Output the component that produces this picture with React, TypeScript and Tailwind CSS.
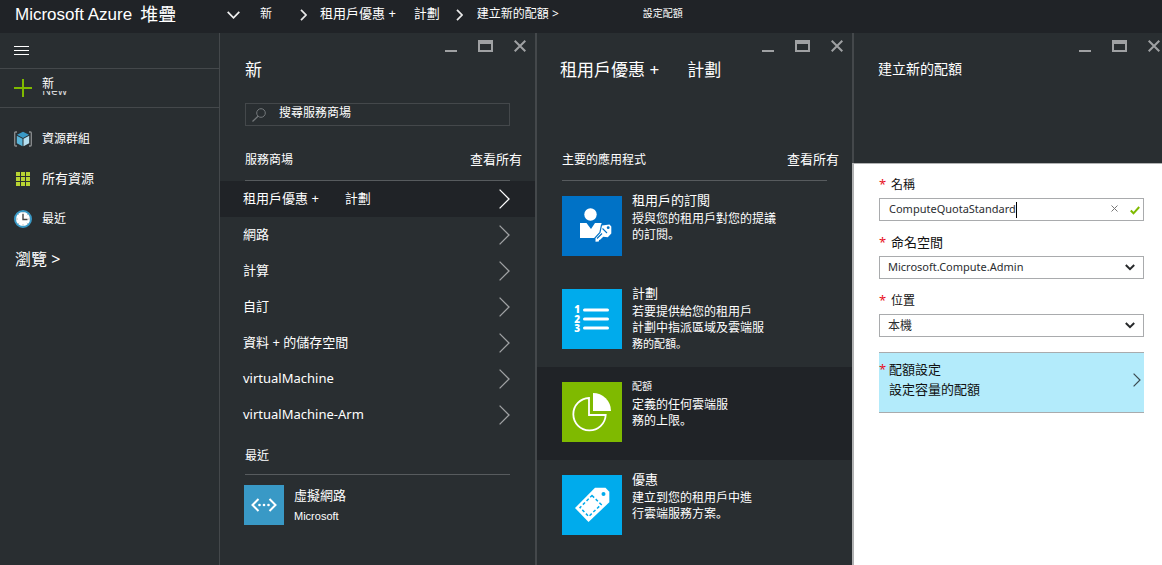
import React from "react";

const CJK = "font-['Noto_Sans','Noto_Sans_CJK_TC',sans-serif]";

function WindowControls() {
  const button = "block text-[#9fa1a3]";
  return (
    <div className="flex items-center">
      <button type="button" aria-label="最小化" className={button}>
        <svg width="12" height="14" viewBox="0 0 12 14" className="block">
          <path d="M0 12h12" stroke="currentColor" strokeWidth="2" />
        </svg>
      </button>
      <button type="button" aria-label="最大化" className={`${button} ml-[21px]`}>
        <svg width="15" height="14" viewBox="0 0 15 14" className="block">
          <path fillRule="evenodd" fill="currentColor" d="M0 1h15v12H0zM2 5v6h11V5z" />
        </svg>
      </button>
      <button type="button" aria-label="關閉" className={`${button} ml-[21px]`}>
        <svg width="12" height="14" viewBox="0 0 12 14" className="block">
          <path d="M.7 1.700l10.600 10.600M11.300 1.700L.7 12.300" stroke="currentColor" strokeWidth="2" />
        </svg>
      </button>
    </div>
  );
}

function ChevronRight({ className }: { className?: string }) {
  return (
    <svg width="11" height="20" viewBox="0 0 11 20" fill="none" className={`block shrink-0 ${className ?? ""}`}>
      <path d="M.6 .6L10 10L.6 19.400" stroke="currentColor" strokeWidth="1.300" />
    </svg>
  );
}

function CrumbChevron() {
  return (
    <svg width="7" height="12" viewBox="0 0 7 12" fill="none" className="mt-0.5 block shrink-0">
      <path d="M1 .8L6 6L1 11.200" stroke="#e8e8e8" strokeWidth="1.700" />
    </svg>
  );
}

function Header() {
  return (
    <header className="flex h-[33px] shrink-0 items-center overflow-hidden bg-[#202327] pb-[6px] whitespace-nowrap text-white">
      <h1 className="flex w-[227px] shrink-0 gap-2 pt-0.5 pl-[15px] font-['Liberation_Sans','Noto_Sans_CJK_TC',sans-serif] text-[17px] leading-6">
        <span>Microsoft Azure</span>
        <span className="text-lg leading-6">堆疊</span>
      </h1>
      <button type="button" aria-label="展開" className="shrink-0">
        <svg width="13" height="8" viewBox="0 0 13 8" fill="none" className="mt-0.5 block">
          <path d="M.7 .8L6.500 6.800L12.300 .8" stroke="#f0f0f0" strokeWidth="1.700" />
        </svg>
      </button>
      <nav aria-label="階層" className="flex items-center">
        <a href="#new" className="ml-5 text-xs">新</a>
        <span className="ml-7 flex"><CrumbChevron /></span>
        <a href="#offers" className="ml-[13px] flex text-[13px]">
          <span>租用戶優惠 +</span>
          <span className="ml-[18px]">計劃</span>
        </a>
        <span className="ml-4 flex"><CrumbChevron /></span>
        <a href="#quota" className="ml-[14px] text-xs">建立新的配額 &gt;</a>
        <a href="#settings" className="ml-[84px] text-[10px]">設定配額</a>
      </nav>
    </header>
  );
}

function CubeIcon() {
  return (
    <svg width="18" height="16" viewBox="0 0 18 16" fill="none">
      <path d="M3 1H1.500Q.7 1 .7 2v12q0 1 .8 1H3M15 1h1.500q.8 0 .8 1v12q0 1-.8 1H15" stroke="#8a8d8f" strokeWidth="1.300" />
      <path d="M9 .8l6 3-6 3.200-6-3.200z" fill="#3999c6" />
      <path d="M2.800 4.700l5.700 3v7.500l-5.700-3z" fill="#59b4d9" />
      <path d="M15.200 4.700l-5.700 3v7.500l5.700-3z" fill="#b5dff0" />
    </svg>
  );
}

function GridIcon() {
  return (
    <svg width="18" height="14" viewBox="0 0 18 14" fill="#b8d432">
      {[0, 5, 10].map((y) => [2, 7, 12].map((x) => <rect key={`${x}-${y}`} x={x} y={y} width="4" height="4" />))}
    </svg>
  );
}

function ClockIcon() {
  return (
    <svg width="18" height="18" viewBox="0 0 18 18" fill="none">
      <circle cx="9" cy="9" r="8" fill="#fff" stroke="#3999c6" strokeWidth="2" />
      <path d="M9 4v5.500h4.500" stroke="#444" strokeWidth="1.400" />
      <path d="M9 2.500v1M9 14.500v1M2.500 9h1M14.500 9h1M4.500 4.500l.6.6M13.500 4.500l-.6.6M4.500 13.500l.6-.6M13.500 13.500l-.6-.6" stroke="#888" />
    </svg>
  );
}

function Sidebar() {
  return (
    <aside className="border-r border-[#44484b] text-white">
      <div className="flex h-9 items-center border-b border-[#44484b] pl-3.5">
        <button type="button" aria-label="功能表">
          <svg width="15" height="9" viewBox="0 0 15 9" className="block">
            <path d="M0 .5h15M0 4.500h15M0 8.500h15" stroke="#fff" />
          </svg>
        </button>
      </div>
      <button type="button" className="flex h-[39px] w-full items-center border-b border-[#44484b] pl-3.5 text-left">
        <svg width="18" height="18" viewBox="0 0 18 18" className="block">
          <path d="M9 0v18M0 9h18" stroke="#7fba00" strokeWidth="2" />
        </svg>
        <span className="ml-2.5 flex flex-col pb-1 text-xs">
          <span className="leading-[14px]">新</span>
          <span className="flex h-1 items-end overflow-hidden leading-[8px] text-[#d5d6d7]">New</span>
        </span>
      </button>
      <nav aria-label="主選單" className="pt-[11px]">
        <a href="#groups" className="flex h-10 items-center gap-2.5 pl-3.5 text-xs"><CubeIcon />資源群組</a>
        <a href="#all" className="flex h-10 items-center gap-2.5 pl-3.5 text-[13px]"><GridIcon />所有資源</a>
        <a href="#recent" className="flex h-10 items-center gap-2.5 pl-3.5 text-xs"><ClockIcon />最近</a>
        <a href="#browse" className="flex h-10 items-center pl-[15px] text-base">瀏覽 &gt;</a>
      </nav>
    </aside>
  );
}

function SectionHeading({ title }: { title: string }) {
  return (
    <div className="flex h-[29px] items-center justify-between pr-[13px] pb-3 pl-[25px]">
      <h3 className="text-xs">{title}</h3>
      <a href="#see-all" className="text-[13px]">查看所有</a>
    </div>
  );
}

const categories = [
  { parts: ["租用戶優惠 +", "計劃"], active: true },
  { parts: ["網路"], active: false },
  { parts: ["計算"], active: false },
  { parts: ["自訂"], active: false },
  { parts: ["資料 + 的儲存空間"], active: false },
  { parts: ["virtualMachine"], active: false },
  { parts: ["virtualMachine-Arm"], active: false },
];

function NewPanel() {
  return (
    <section className="text-white">
      <div className="flex h-6 items-center justify-end pt-px pr-[9px]"><WindowControls /></div>
      <h2 className="pl-[25px] text-[17px] leading-[26px]">新</h2>
      <div className="mt-5 mr-[25px] ml-[25px] flex h-[23px] items-center border border-[#44484b] pl-1.5">
        <svg width="14" height="14" viewBox="0 0 14 14" fill="none" stroke="#74787b" className="shrink-0">
          <circle cx="9" cy="5" r="4.300" />
          <path d="M6 8.200L.5 13.500" strokeWidth="1.200" />
        </svg>
        <input
          type="text"
          aria-label="搜尋服務商場"
          placeholder="搜尋服務商場"
          className="mb-1 ml-[13px] h-4 w-full min-w-0 bg-transparent text-xs outline-none placeholder:text-white"
        />
      </div>
      <div className="pt-[25px]">
        <SectionHeading title="服務商場" />
      </div>
      <div className="mr-[25px] ml-[25px] border-t border-[#575b5e]" />
      <ul>
        {categories.map((c) => (
          <li key={c.parts[0]}>
            <a
              href="#category"
              className={`flex h-9 items-center justify-between pr-[25px] pl-[23px] text-[13px] ${c.active ? "bg-[#202327]" : ""}`}
            >
              <span className="flex gap-[26px]">
                {c.parts.map((p) => <span key={p}>{p}</span>)}
              </span>
              <ChevronRight className={c.active ? "text-white" : "text-[#a0a2a4]"} />
            </a>
          </li>
        ))}
      </ul>
      <h3 className="flex h-[41px] items-center pt-1 pl-[25px] text-xs">最近</h3>
      <div className="mr-[25px] ml-[25px] border-t border-[#575b5e]" />
      <a href="#vnet" className="flex gap-2.5 pt-2.5 pl-6">
        <svg width="40" height="40" viewBox="0 0 40 40" fill="none" className="block">
          <rect width="40" height="40" fill="#3999c6" />
          <path d="M14.500 14L8.500 20l6 6M25.500 14l6 6-6 6" stroke="#fff" strokeWidth="2" />
          <circle cx="15.500" cy="20" r="1.300" fill="#fff" />
          <circle cx="20" cy="20" r="1.300" fill="#fff" />
          <circle cx="24.500" cy="20" r="1.300" fill="#fff" />
        </svg>
        <span className="flex flex-col">
          <span className="text-[13px] leading-5">虛擬網路</span>
          <span className="font-['Liberation_Sans',sans-serif] text-[11px] leading-[22px]">Microsoft</span>
        </span>
      </a>
    </section>
  );
}

function SubscriptionIcon() {
  return (
    <svg width="60" height="60" viewBox="0 0 60 60" className="block shrink-0">
      <rect width="60" height="60" fill="#0072c6" />
      <circle cx="28.500" cy="18.500" r="6.200" fill="#fff" />
      <path d="M18 27h6.500l4.500 6 4-6h6.500v15H18z" fill="#fff" />
      <path d="M40 29.500l7.500-1 1.800 2v7l-3.500 3.800-4.500-.6-3.200 3-1 .2-.3 1.600-3.300.3v-3.500l5-5.500z" fill="#fff" stroke="#0072c6" strokeWidth="2.400" />
      <path d="M40 29.500l7.500-1 1.800 2v7l-3.500 3.800-4.500-.6-3.200 3-1 .2-.3 1.600-3.300.3v-3.500l5-5.500z" fill="#fff" />
      <circle cx="46.200" cy="31.700" r="1.400" fill="#0072c6" />
      <path d="M40.500 32.500l4.500 4.500M35 42.500l5-5" stroke="#0072c6" strokeWidth="1.100" />
    </svg>
  );
}

function PlanIcon() {
  return (
    <svg width="60" height="60" viewBox="0 0 60 60" className="block shrink-0">
      <rect width="60" height="60" fill="#00abec" />
      <path d="M22.500 21h23M22.500 30h23M22.500 39h23" stroke="#fff" strokeWidth="3" strokeLinecap="round" />
      <g fill="#fff" fontFamily="Open Sans, sans-serif" fontSize="10" fontWeight="800" textAnchor="middle">
        <text x="15.300" y="24.300">1</text>
        <text x="15.300" y="33.500">2</text>
        <text x="15.300" y="42.700">3</text>
      </g>
    </svg>
  );
}

function QuotaIcon() {
  return (
    <svg width="60" height="60" viewBox="0 0 60 60" fill="none" className="block shrink-0">
      <rect width="60" height="60" fill="#7fba00" />
      <path d="M27 16a16.200 16.200 0 1 0 16.700 17H27z" stroke="#fff" strokeWidth="1.800" />
      <path d="M31 11a18 18 0 0 1 18 18H31z" fill="#fff" />
    </svg>
  );
}

function OfferIcon() {
  return (
    <svg width="60" height="60" viewBox="0 0 60 60" fill="none" className="block shrink-0">
      <rect width="60" height="60" fill="#00abec" />
      <path d="M33 12.800h10.500l3.800 4v10.500L26.500 47 13 33z" fill="#fff" />
      <circle cx="41.500" cy="19" r="2" fill="#00abec" />
      <path d="M30 20.500l9.200 9L26.700 41.500l-8.700-9z" stroke="#00abec" strokeWidth="1.500" strokeDasharray="3 2.200" />
    </svg>
  );
}

const apps = [
  {
    title: "租用戶的訂閱",
    titleSize: "text-[13px]",
    lines: [
      { text: "授與您的租用戶對您的提議", size: "text-xs" },
      { text: "的訂閱。", size: "text-xs" },
    ],
    icon: <SubscriptionIcon />,
    active: false,
  },
  {
    title: "計劃",
    titleSize: "text-[13px]",
    lines: [
      { text: "若要提供給您的租用戶", size: "text-xs" },
      { text: "計劃中指派區域及雲端服", size: "text-xs" },
      { text: "務的配額。", size: "text-[11px]" },
    ],
    icon: <PlanIcon />,
    active: false,
  },
  {
    title: "配額",
    titleSize: "text-[10px]",
    lines: [
      { text: "定義的任何雲端服", size: "text-xs" },
      { text: "務的上限。", size: "text-xs" },
    ],
    icon: <QuotaIcon />,
    active: true,
  },
  {
    title: "優惠",
    titleSize: "text-[13px]",
    lines: [
      { text: "建立到您的租用戶中進", size: "text-xs" },
      { text: "行雲端服務方案。", size: "text-xs" },
    ],
    icon: <OfferIcon />,
    active: false,
  },
];

// Sets the full stop at the baseline corner instead of the centre of its cell.
function DescriptionLine({ text, size }: { text: string; size: string }) {
  const ends = text.endsWith("。");
  return (
    <span className={`${size} leading-4`}>
      {ends ? text.slice(0, -1) : text}
      {ends && <span className="font-['Noto_Sans_CJK_JP',sans-serif] leading-none">。</span>}
    </span>
  );
}

function OffersPanel() {
  return (
    <section className="border-l-2 border-[#44484b] text-white">
      <div className="flex h-6 items-center justify-end pt-px pr-[9px]"><WindowControls /></div>
      <h2 className="flex pl-[23px] text-[17px] leading-[26px]">
        <span>租用戶優惠 +</span>
        <span className="ml-7">計劃</span>
      </h2>
      <div className="pt-[68px]">
        <SectionHeading title="主要的應用程式" />
      </div>
      <div className="mr-[25px] ml-[25px] border-t border-[#575b5e]" />
      <ul>
        {apps.map((a) => (
          <li key={a.title}>
            <a href="#app" className={`flex h-[93px] gap-2.5 pl-[25px] ${a.active ? "bg-[#202327]" : ""}`}>
              <span className="pt-[15px]">{a.icon}</span>
              <span className="flex flex-col pt-[11px]">
                <span className={`${a.titleSize} leading-4`}>{a.title}</span>
                <span className="mt-[3px] flex flex-col">
                  {a.lines.map((l) => <DescriptionLine key={l.text} text={l.text} size={l.size} />)}
                </span>
              </span>
            </a>
          </li>
        ))}
      </ul>
    </section>
  );
}

function FieldLabel({ id, text, size }: { id: string; text: string; size: string }) {
  return (
    <label htmlFor={id} className={`mb-[3px] flex h-5 items-center ${size}`}>
      <span aria-hidden="true" className="w-3 text-[13px] text-[#e81123]">*</span>
      {text}
    </label>
  );
}

type SelectFieldProps = { id: string; label: string; size: string; value: string; valueSize: string };

function SelectField({ id, label, size, value, valueSize }: SelectFieldProps) {
  return (
    <div>
      <FieldLabel id={id} text={label} size={size} />
      <div className="relative">
        <select
          id={id}
          defaultValue={value}
          className={`block h-[23px] w-full appearance-none border border-[#a9abad] bg-white pr-6 pl-2 text-[#2b2d2f] outline-none ${valueSize}`}
        >
          <option>{value}</option>
        </select>
        <svg width="10" height="7" viewBox="0 0 10 7" fill="none" className="pointer-events-none absolute top-2 right-[9px]">
          <path d="M.8 1L5 5.200L9.200 1" stroke="#26282a" strokeWidth="2" />
        </svg>
      </div>
    </div>
  );
}

function QuotaPanel() {
  return (
    <section className="flex flex-col">
      <div className="h-[130px] border-l-2 border-[#44484b] text-white">
        <div className="flex h-6 items-center justify-end pt-px pr-0.5"><WindowControls /></div>
        <h2 className="pl-6 text-sm leading-6">建立新的配額</h2>
      </div>
      <form className="flex flex-1 flex-col gap-3 border-t border-l-2 border-[#b1b2b3] bg-white pt-[11px] pr-[18px] pl-[25px] text-[#111]">
        <div>
          <FieldLabel id="quota-name" text="名稱" size="text-xs" />
          <div className="flex h-[23px] items-center border border-[#a9abad] pr-[3px] pl-[9px]">
            <input
              id="quota-name"
              type="text"
              defaultValue="ComputeQuotaStandard"
              className="field-sizing-content min-w-0 text-[11px] text-[#2b2d2f] outline-none"
            />
            <span className="h-4 w-px shrink-0 bg-black" />
            <button type="button" aria-label="清除" className="mb-0.5 ml-auto">
              <svg width="7" height="7" viewBox="0 0 7 7" className="block">
                <path d="M.5 .5l6 6M6.500 .5l-6 6" stroke="#777" />
              </svg>
            </button>
            <svg width="10" height="9" viewBox="0 0 10 9" fill="none" className="mt-0.5 ml-3 block shrink-0">
              <path d="M.8 4.500L3.500 7.300L9.200 1" stroke="#7fba00" strokeWidth="2" />
            </svg>
          </div>
        </div>
        <SelectField id="namespace" label="命名空間" size="text-[13px]" value="Microsoft.Compute.Admin" valueSize="text-[11px]" />
        <SelectField id="location" label="位置" size="text-xs" value="本機" valueSize="text-xs" />
        <button
          type="button"
          className="mt-[3px] flex h-[61px] items-center justify-between border-y border-[#a9abad] bg-[#b3ebfb] pr-[3px] text-left text-[13px] leading-5"
        >
          <span className="flex pb-[7px]">
            <span aria-hidden="true" className="w-2.5 text-[#e81123]">*</span>
            <span className="flex flex-col">
              <span>配額設定</span>
              <span>設定容量的配額</span>
            </span>
          </span>
          <svg width="8" height="14" viewBox="0 0 8 14" fill="none" className="mb-1.5 block">
            <path d="M.6 .6L7 7L.6 13.400" stroke="#3b4a50" strokeWidth="1.200" />
          </svg>
        </button>
      </form>
    </section>
  );
}

export default function App() {
  return (
    <div className={`flex min-h-screen flex-col bg-[#292e31] ${CJK}`}>
      <Header />
      <main className="grid flex-1 grid-cols-[220px_315fr_317fr_310fr]">
        <Sidebar />
        <NewPanel />
        <OffersPanel />
        <QuotaPanel />
      </main>
    </div>
  );
}
